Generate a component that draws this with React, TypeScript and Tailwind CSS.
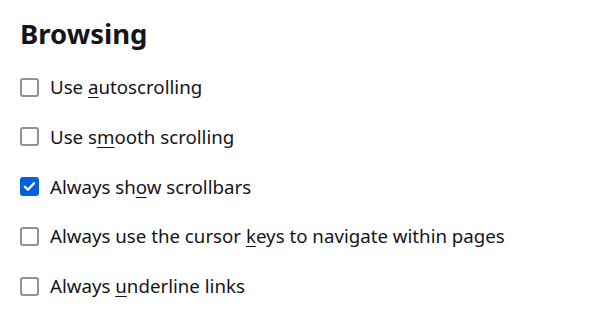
import React, { useState } from "react";

const items = [
  { pre: "Use ", key: "a", post: "utoscrolling", checked: false },
  { pre: "Use s", key: "m", post: "ooth scrolling", checked: false },
  { pre: "Always sh", key: "o", post: "w scrollbars", checked: true },
  { pre: "Always use the cursor ", key: "k", post: "eys to navigate within pages", checked: false },
  { pre: "Always ", key: "u", post: "nderline links", checked: false },
];

const App = () => {
  const [checks, setChecks] = useState(items.map((i) => i.checked));

  return (
    <div
      className="w-[597px] h-[312px] bg-white text-[#15141a] pl-[20px] pt-[14px]"
      style={{ fontFamily: '"Noto Sans", "Open Sans", sans-serif' }}
    >
      <h1 className="text-[27.5px] font-bold leading-[40px] mb-[22px]">Browsing</h1>
      <div className="flex flex-col gap-[27.8px]">
        {items.map((item, index) => (
          <label key={index} className="flex items-center h-[22px] text-[18.7px] cursor-default">
            <span
              className={
                checks[index]
                  ? "w-[19px] h-[19px] rounded-[3px] bg-[#0061e0] border-2 border-[#0061e0] flex items-center justify-center shrink-0"
                  : "w-[19px] h-[19px] rounded-[3px] bg-white border-2 border-[#8f8f9d] shrink-0"
              }
              onClick={() => setChecks(checks.map((c, i) => (i === index ? !c : c)))}
            >
              {checks[index] && (
                <svg width="13" height="13" viewBox="0 0 12 12" fill="none">
                  <path d="M1.8 6.3 L4.6 9 L10.2 3" stroke="white" strokeWidth="2.2" strokeLinecap="round" strokeLinejoin="round" />
                </svg>
              )}
            </span>
            <span className="ml-[11px] whitespace-nowrap">
              {item.pre}
              <span className="underline underline-offset-[3px]">{item.key}</span>
              {item.post}
            </span>
          </label>
        ))}
      </div>
    </div>
  );
};

export default App;
